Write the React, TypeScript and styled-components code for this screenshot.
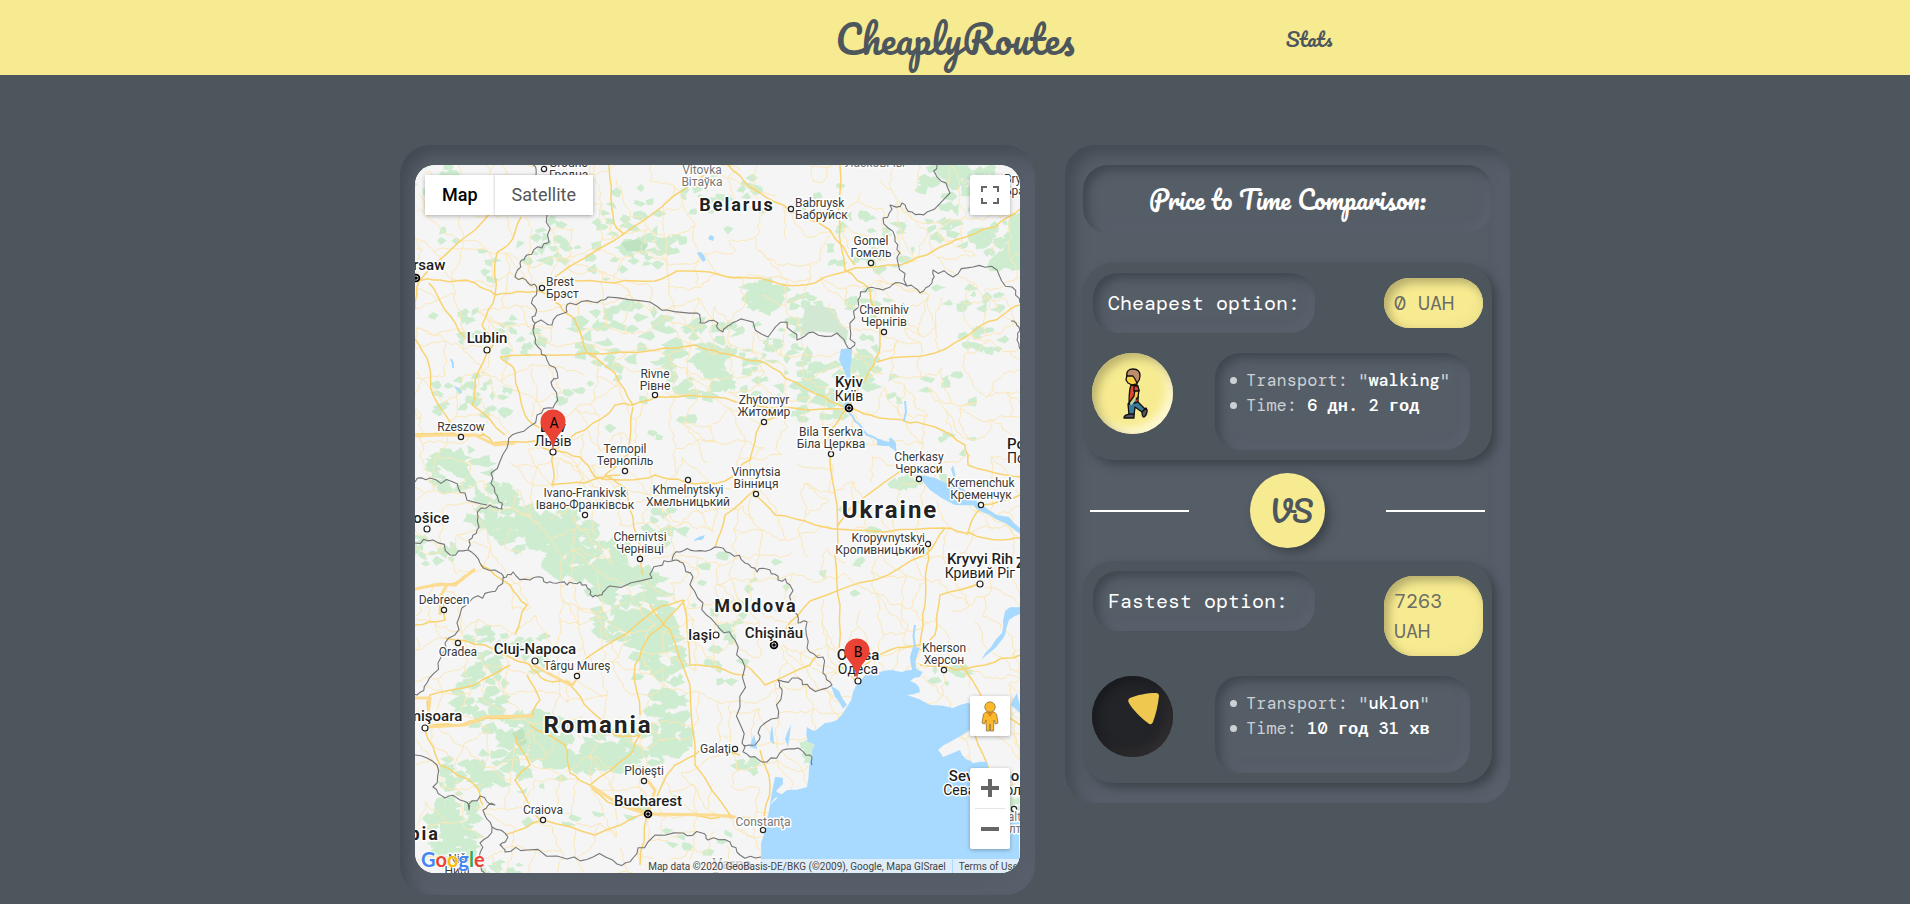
import React from 'react';
import styled, { createGlobalStyle, css } from 'styled-components';

const script = '"Pacifico", "Lato", "Liberation Sans", sans-serif';
const mono = '"DM Mono", "Liberation Mono", monospace';

const GlobalStyle = createGlobalStyle`
  * { box-sizing: border-box; }
  body { margin: 0; background: #4d555d; font-family: ${mono}; color: #fff; }
  button { font: inherit; border: 0; padding: 0; cursor: pointer; }
  h1, h2, h3, p, ul { margin: 0; padding: 0; font-weight: 400; }
`;

/* ---------- page frame ---------- */

const Header = styled.header`
  height: 75px;
  background: #f7eb91;
  color: #4d555d;
  font-family: ${script};
`;

const Nav = styled.nav`
  display: grid;
  grid-template-columns: repeat(3, 1fr);
  max-width: 1062px;
  height: 100%;
  margin: 0 auto;
  padding-top: 2px;
  align-items: center;
  justify-items: center;
`;

const NavLink = styled.a<{ $brand?: boolean }>`
  color: inherit;
  text-decoration: none;
  grid-column: ${(p) => (p.$brand ? 2 : 3)};
  font-size: ${(p) => (p.$brand ? 38 : 20)}px;
  line-height: 73px;
`;

const Main = styled.main`
  display: grid;
  grid-template-columns: repeat(12, 1fr);
  gap: 30px;
  align-items: start;
  max-width: 1140px;
  margin: 0 auto;
  padding: 70px 15px 9px;
`;

const hollow = css`
  background: #555d67;
  box-shadow: inset 5px 5px 10px #40474e, inset -5px -5px 10px #5b636e;
`;

const Panel = styled.section<{ $span: number; $pad: string }>`
  grid-column: span ${(p) => p.$span};
  padding: ${(p) => p.$pad};
  border-radius: 30px;
  background: #555d67;
  box-shadow: inset 8px 8px 15px #434a52, inset -8px -8px 15px #5a626e;
`;

/* ---------- comparison ---------- */

const Title = styled.h1`
  ${hollow}
  border-radius: 25px;
  padding: 20px 10px;
  margin-bottom: 30px;
  text-align: center;
  font: 400 25px/28px ${script};
`;

const Card = styled.article`
  border-radius: 30px;
  background: #4d555d;
  box-shadow: 5px 5px 10px #3d444b;
  padding: 10px 9px;
`;

const CardRow = styled.div<{ $details?: boolean }>`
  display: flex;
  justify-content: space-between;
  align-items: flex-start;
  padding-left: 1px;
  ${(p) => p.$details && 'margin-top: 20px; padding: 0 13px 0 0;'}
`;

const OptionName = styled.h2`
  ${hollow}
  border-radius: 25px;
  padding: 15px;
  width: 57%;
  font-size: 20px;
  line-height: 30px;
`;

const Price = styled.p`
  width: 99px;
  margin-top: 5px;
  padding: 10px;
  border-radius: 30px;
  background: #f7eb91;
  box-shadow: inset 5px 5px 10px #b8ae6b, inset -5px -5px 10px #f1e58f;
  color: #6d6d66;
  font-size: 20px;
  line-height: 30px;
`;

const Avatar = styled.div<{ $dark?: boolean }>`
  width: 81px;
  height: 81px;
  border-radius: 50%;
  overflow: hidden;
  background: ${(p) => (p.$dark ? '#232428' : '#f7eb91')};
  box-shadow: ${(p) =>
    p.$dark
      ? 'inset 5px 5px 10px #191b1e, inset -5px -5px 10px #302e2f'
      : 'inset 5px 5px 10px #bcb26e, inset -5px -5px 10px #fffbdc'};
  svg { display: block; }
`;

const Details = styled.ul`
  ${hollow}
  width: 255px;
  border-radius: 25px;
  padding: 15px 12px 32px 31px;
  color: #ccd0d3;
  font-size: 17px;
  line-height: 25px;
  list-style: none;
  white-space: nowrap;
  b { color: #fff; }
`;

const Detail = styled.li`
  position: relative;
  &::before {
    content: '';
    position: absolute;
    left: -16px;
    top: 9px;
    width: 7px;
    height: 7px;
    border-radius: 50%;
    background: #ccd0d3;
  }
`;

const Versus = styled.div`
  display: flex;
  align-items: center;
  justify-content: space-between;
  margin: 13px 0;
  padding: 0 7px;
`;

const Rule = styled.span`
  width: 25%;
  height: 2px;
  background: #fff;
`;

const VersusBadge = styled.strong`
  width: 75px;
  height: 75px;
  border-radius: 50%;
  background: #f7eb91;
  box-shadow: 5px 5px 10px #3d444b;
  color: #4d555d;
  text-align: center;
  padding-left: 7px;
  font: 400 30px/75px ${script};
`;

/* ---------- map ---------- */

const MapFrame = styled.div`
  position: relative;
  aspect-ratio: 605 / 708;
  border-radius: 20px;
  overflow: hidden;
  background: #f5f5f5;
  font-family: Roboto, sans-serif;
`;

const MapCanvas = styled.svg`
  display: block;
  width: 100%;
  height: 100%;
`;

const controlFace = css`
  background: #fff;
  border-radius: 2px;
  box-shadow: 0 1px 4px rgba(0, 0, 0, 0.3);
`;

const MapTypes = styled.div`
  ${controlFace}
  position: absolute;
  left: 10px;
  top: 10px;
  display: flex;
  height: 40px;
`;

const MapType = styled.button<{ $active?: boolean }>`
  background: #fff;
  padding: 0 17px;
  font-size: 18px;
  line-height: 40px;
  color: ${(p) => (p.$active ? '#000' : '#565656')};
  font-weight: ${(p) => (p.$active ? 500 : 400)};
  & + & { box-shadow: -1px 0 2px rgba(0, 0, 0, 0.15); }
`;

const Fullscreen = styled.div`
  position: absolute;
  right: 10px;
  top: 10px;
`;

const SideControls = styled.div`
  position: absolute;
  right: 10px;
  bottom: 24px;
  display: grid;
  gap: 32px;
`;

const Square = styled.button`
  ${controlFace}
  display: grid;
  place-items: center;
  width: 40px;
  height: 40px;
`;

const ZoomGroup = styled.div`
  ${controlFace}
  display: grid;
  justify-items: center;
`;

const ZoomButton = styled.button`
  display: grid;
  place-items: center;
  width: 40px;
  height: 40px;
  background: none;
`;

const ZoomLine = styled.span`
  width: 30px;
  height: 1px;
  background: #e6e6e6;
`;

const GoogleMark = styled.a`
  position: absolute;
  left: 6px;
  bottom: 1px;
  font: 700 20px/26px Lato, sans-serif;
  text-decoration: none;
  text-shadow: 0 0 2px #fff, 0 0 2px #fff;
`;

const Letter = styled.span<{ $c: string }>`
  color: ${(p) => p.$c};
`;

const Credits = styled.div`
  position: absolute;
  right: 0;
  bottom: 0;
  display: flex;
  height: 14px;
  font-size: 10px;
  line-height: 16px;
  color: #444;
  white-space: nowrap;
  a { color: inherit; text-decoration: none; }
`;

const Credit = styled.span`
  background: rgba(245, 245, 245, 0.7);
  padding: 0 6px;
  & + & { margin-left: 1px; }
  &:last-child { padding-right: 2px; }
`;

/* Terrain drawing helpers: a seeded generator keeps the landscape stable. */
type Pt = [number, number];

function seeded(seed: number) {
  let s = seed;
  return () => {
    s = (s * 1664525 + 1013904223) % 4294967296;
    return s / 4294967296;
  };
}

const parse = (t: string): Pt[] => t.split(' ').map((p) => p.split(',').map(Number) as Pt);

function rough(points: Pt[], amount: number, passes: number, seed: number): Pt[] {
  const rnd = seeded(seed);
  let pts = points;
  for (let k = 0; k < passes; k++) {
    const next: Pt[] = [pts[0]];
    for (let i = 1; i < pts.length; i++) {
      const [ax, ay] = pts[i - 1];
      const [bx, by] = pts[i];
      const len = Math.hypot(bx - ax, by - ay);
      const d = (rnd() - 0.5) * Math.min(len, 14) * amount;
      next.push([(ax + bx) / 2 - ((by - ay) / (len || 1)) * d, (ay + by) / 2 + ((bx - ax) / (len || 1)) * d], pts[i]);
    }
    pts = next;
  }
  return pts;
}

const toPath = (pts: Pt[], close = false) =>
  'M' + pts.map((p) => `${p[0].toFixed(1)} ${p[1].toFixed(1)}`).join('L') + (close ? 'Z' : '');

const BORDERS = [
  '118,0 121,10 132,50 134,77 127,83 112,90 105,98 100,112 113,118 122,125 120,142 117,152 118,165 123,182 132,195 143,213 136,217 142,232 138,243 122,250 102,268 92,283 76,308 80,328 87,338 87,344 75,340 63,352 62,365 54,375 53,385 65,398 85,408 88,413 98,407 115,415 128,413 138,418 152,420 165,417 175,425 178,432 187,430 195,421 237,413 243,401 257,396 265,387 280,386 300,382 315,388 330,398 342,407 355,405 363,415 375,420 377,442 383,458 392,457 392,483 408,492 408,508 417,520 395,523 383,513 363,515 367,528 363,553 343,568 340,580 328,580',
  '257,396 268,398 278,412 288,438 300,458 305,464 320,475 330,502 325,542 327,578 335,592 352,597 368,585 383,583 395,590 397,600',
  '0,317 15,313 38,317 50,328 72,340',
  '0,378 18,375 35,390 53,385',
  '88,413 75,427 58,433 42,458 30,478 23,498 12,518 2,530 0,530',
  '0,590 22,600 18,622 30,633 45,635 54,645 65,631 80,640 68,645 77,662 65,678 63,695 70,708',
  '77,662 93,672 85,680 90,687 112,685 152,694 178,692 202,699 218,693 233,677 268,668 287,668 293,675 315,677 325,690 346,692',
  '118,165 122,157 137,160 152,147 155,138 178,137 193,132 235,137 252,145 282,148 285,158 303,158 308,167 315,160 330,155 353,172 372,157 382,175 398,167 422,168 433,183 440,178 435,158 443,135 453,123 468,125 477,120 492,121 483,98 485,88 480,72 468,53 475,40 487,38 497,47 512,47 535,28 522,12 522,0',
  '492,121 505,128 517,118 518,105 538,112 558,102 582,105 597,122 605,138',
  '596,156 604,162 602,175 605,184',
];

const SEA =
  '345,708 346,694 346,678 350,658 355,640 372,625 392,622 394,603 397,590 400,580 393,577 392,562 400,566 410,558 422,555 432,542 438,527 445,517 452,508 465,507 477,505 487,507 497,505 495,492 498,482 505,483 501,494 501,503 508,507 505,512 495,516 504,522 505,527 492,530 515,540 538,543 552,538 572,543 578,558 565,563 555,565 535,577 523,585 528,592 545,585 551,594 558,598 572,597 575,608 560,620 565,640 585,650 596,658 605,646 605,708';

const WATER = [
  '426,184 437,184 435,205 438,222 430,226 430,208 424,195',
  '430,226 434,226 433,244 429,244',
  '462,275 474,277 475,272 481,278 482,288 478,284 474,281 462,280',
  '502,310 520,313 540,322 536,304 538,300 542,318 560,333 564,340 540,340 515,325',
  '552,335 567,340 582,350 594,352 605,363 605,369 590,358 575,350 562,344',
  '590,446 596,442 605,442 605,449 594,455 590,470 578,484 566,495 576,482 587,468 588,456',
  '416,521 424,526 432,540 428,544 420,532',
  '360,612 368,613 368,619 361,626 369,630 360,633 355,640 358,622',
  '282,88 286,87 291,95 288,97', '280,374 290,370 287,375 279,376', '295,70 299,72 298,76 293,74',
  '335,582 339,570 342,584', '355,575 357,560 359,580', '370,574 376,560 373,582', '596,540 602,528 605,540 605,548',
];

const RIVERS = ['434,248 440,256 448,265 458,272 468,276', '488,138 489,150', '490,236 489,256', '36,194 38,203', '40,222 46,228', '500,482 500,460', '588,472 570,490'];

const HIGHWAYS = [
  '0,114 25,115 60,118 80,130 110,127 125,125 150,113 200,118 240,116 262,106 305,110 345,113 370,120 400,118 440,103 485,100 520,85 540,75 580,62 605,44',
  '14,118 30,145 50,172', '106,52 93,80 82,88 80,130 67,160 78,180 60,215 57,240 90,270', '194,0 197,45 200,60 209,70',
  '0,174 14,200 18,230 40,268 0,270', '85,192 100,206 110,250 128,266', '85,192 130,190 170,188 240,185 280,180 305,188 345,196 370,213 410,232 430,242',
  '122,125 145,140 160,155 168,175 172,188 200,208 218,240 240,232 262,232 310,233 355,243 432,244',
  '138,285 170,265 200,240 218,240', '138,285 165,292 180,312 212,315 240,310 270,317 310,316 335,295 345,260 365,250',
  '218,242 212,290 190,310 212,325 218,352 225,390 228,410', '138,287 137,320 170,318 205,310', '70,270 0,269', '30,270 60,262 78,278 120,276 138,287',
  '432,244 455,250 495,258 520,262 550,280 553,300 590,310 605,312', '432,244 415,265 415,290 422,340 420,390 425,440 425,500 440,515', '432,244 455,205 465,180 465,165 455,125 430,105 425,60 425,0',
  '462,197 520,188 560,165 588,150 605,140', '313,0 335,22 368,40 415,65 440,100', '140,112 200,75 260,30 290,10', '0,145 5,115 60,65 90,35',
  '340,330 360,350 400,360 470,367 530,363 555,368 585,375 605,373', '340,325 310,350 300,383', '422,362 440,340 480,310 500,300', '530,363 510,390 460,415 395,436 370,465',
  '440,505 475,485 505,480 510,440 512,400 515,378', '505,500 540,505 580,497 605,490', '567,418 525,430 520,470 505,485', '552,370 560,350 567,340 605,330',
  '30,473 70,480 100,495 115,500 130,515 158,520 165,500 200,475 240,445 268,435', '112,510 125,535 118,550 70,553 40,560 12,560', '155,520 175,545 200,570 225,570 215,590 175,620',
  '100,470 112,440 95,420 65,400', '0,425 40,418 60,405', '0,460 30,455 28,430', '12,560 15,530 60,520 95,500', '10,565 25,600 60,620 68,640', '115,560 150,580 155,608 175,620 200,640 232,648',
  '232,648 260,600 285,585 325,590', '232,648 180,670 128,655 90,670', '232,650 225,700', '232,650 290,652 315,650 345,660', '125,655 100,615 115,600 100,570', '268,435 275,500 310,505 330,510',
  '345,585 355,620 345,660', '315,650 280,600 275,520 255,465 235,440', '330,500 350,520 395,500 405,490', '560,570 575,610 590,620', '580,545 605,560', '545,500 560,520 575,545', '270,435 235,470 220,500 225,550',
];

/* Wooded areas: centre, radii and number of patches. */
const FORESTS: [number, number, number, number, number][] = [
  [20, 15, 30, 20, 16], [80, 80, 60, 40, 14], [130, 75, 25, 25, 16], [220, 55, 40, 40, 26], [245, 80, 28, 10, 20], [195, 95, 50, 25, 14],
  [40, 160, 30, 20, 10], [105, 175, 25, 22, 20], [55, 235, 45, 25, 28], [215, 170, 60, 35, 36], [285, 195, 35, 40, 40], [345, 175, 40, 25, 24],
  [395, 150, 30, 20, 22], [430, 60, 50, 40, 20], [310, 35, 45, 30, 22], [350, 130, 20, 14, 31], [545, 20, 40, 28, 34], [595, 80, 25, 30, 30],
  [515, 70, 40, 22, 16], [465, 95, 25, 14, 12], [460, 140, 30, 15, 14], [545, 135, 50, 15, 12], [570, 175, 25, 12, 14], [400, 220, 40, 40, 36],
  [450, 200, 14, 30, 24], [345, 210, 45, 20, 18], [50, 310, 40, 26, 34], [80, 345, 30, 25, 34], [130, 365, 50, 24, 64], [175, 395, 48, 20, 56],
  [15, 385, 25, 18, 20], [215, 420, 40, 18, 34], [220, 455, 40, 28, 62], [245, 490, 24, 45, 48], [70, 480, 25, 16, 16], [70, 530, 32, 35, 38],
  [120, 570, 38, 22, 50], [170, 590, 55, 16, 54], [215, 585, 50, 20, 54], [255, 560, 22, 30, 40], [85, 605, 30, 20, 32], [40, 665, 25, 35, 50],
  [45, 610, 22, 20, 20], [85, 705, 22, 10, 10], [250, 360, 22, 20, 20], [120, 485, 25, 25, 12], [305, 430, 28, 50, 16], [310, 500, 20, 30, 10],
  [395, 585, 6, 12, 14], [335, 600, 12, 8, 8], [490, 317, 12, 8, 14], [535, 510, 22, 10, 10], [598, 640, 8, 15, 16],
  [550, 270, 50, 60, 10], [420, 400, 90, 60, 10], [200, 250, 80, 40, 14], [190, 650, 100, 40, 12], [280, 680, 60, 15, 6], [490, 230, 60, 20, 6],
];

const WOODS = [
  '523,0 552,0 546,14 534,30 528,14', '605,43 595,52 590,82 572,102 590,103 605,105', '552,68 580,62 572,82 562,85 556,78',
  '95,340 112,346 130,350 155,360 180,385 175,395 150,388 118,375 100,360', '30,295 48,300 60,315 80,340 60,330 42,312',
  '165,400 200,392 225,405 215,420 185,424 170,412', '195,445 235,455 255,440 260,470 240,480 205,465', '235,490 250,500 255,520 242,515 235,500',
  '100,560 125,565 150,580 145,595 115,585', '150,588 185,595 205,582 215,595 180,602 150,598', '248,560 262,550 272,560 255,585 240,585',
  '290,180 305,182 312,205 295,212 280,198', '340,132 355,126 368,130 362,144 345,142', '440,182 458,190 455,212 445,220',
  '20,640 40,650 50,670 35,690 25,665', '482,317 498,310 492,326 480,322', '392,578 400,580 399,600 393,590',
];

const rndForest = seeded(41);
const forestPatches = FORESTS.flatMap(([cx, cy, rx, ry, n]) =>
  Array.from({ length: n }, () => {
    const a = rndForest() * Math.PI * 2;
    const r = Math.sqrt(rndForest());
    const x = cx + Math.cos(a) * rx * r;
    const y = cy + Math.sin(a) * ry * r;
    const size = n > 30 ? 8 : 6;
    const corners = 4 + Math.floor(rndForest() * 3);
    const pts: Pt[] = Array.from({ length: corners }, (_, i) => {
      const t = (i / corners) * Math.PI * 2;
      const d = size * (0.25 + rndForest());
      return [x + Math.cos(t) * d * 1.2, y + Math.sin(t) * d * 0.8];
    });
    return toPath(pts, true);
  }),
).join('');
const woodPath = WOODS.map((w, i) => {
  const pts = parse(w);
  return toPath(rough([...pts, pts[0]], 0.7, 2, i + 31), true);
}).join('');

const rndRoad = seeded(9);
const STEP = 23;
const junctions: Pt[][] = Array.from({ length: 33 }, (_, j) =>
  Array.from({ length: 29 }, (_, i) => [(i - 1) * STEP + (rndRoad() - 0.5) * 20, (j - 1) * STEP + (rndRoad() - 0.5) * 20] as Pt),
);
const lanes: string[] = [];
junctions.forEach((row, j) =>
  row.forEach((p, i) => {
    const near = [row[i + 1], junctions[j + 1]?.[i], junctions[j + 1]?.[i + 1]];
    near.forEach((q, k) => {
      if (q && rndRoad() < [0.6, 0.6, 0.2][k]) lanes.push(toPath(rough([p, q], 0.45, 3, i * 71 + j * 13 + k)));
    });
  }),
);

const borderPath = BORDERS.map((b, i) => toPath(rough(parse(b), 0.6, 2, i + 5))).join('');
const highwayPath = HIGHWAYS.map((b, i) => toPath(rough(parse(b), 0.25, 2, i + 77))).join('');
const waterPath = WATER.map((b, i) => toPath(rough(parse(b), 0.15, 1, i), true)).join('');
const riverPath = RIVERS.map((b, i) => toPath(rough(parse(b), 0.4, 1, i))).join('');

type Anchor = 'start' | 'middle' | 'end';
type Place = { x: number; y: number; lines: string[]; dot?: Pt; big?: boolean; capital?: boolean; anchor?: Anchor; faint?: boolean };

const PLACES: Place[] = [
  { x: 134, y: 2, lines: ['Grodno', 'Гродна'], dot: [129, 4], anchor: 'start' },
  { x: 287, y: 9, lines: ['Vitovka', 'Вітаўка'], faint: true },
  { x: 460, y: 2, lines: ['Ласковічы'], faint: true },
  { x: 380, y: 42, lines: ['Babruysk', 'Бабруйск'], dot: [376, 44], anchor: 'start' },
  { x: 456, y: 80, lines: ['Gomel', 'Гомель'], dot: [456, 98] },
  { x: 589, y: 18, lines: ['Bryansk', 'Бранск'], anchor: 'start' },
  { x: -23, y: 105, lines: ['Warsaw'], dot: [1, 113], big: true, capital: true, anchor: 'start' },
  { x: 131, y: 121, lines: ['Brest', 'Брэст'], dot: [127, 123], anchor: 'start' },
  { x: 72, y: 178, lines: ['Lublin'], dot: [72, 185], big: true },
  { x: 469, y: 149, lines: ['Chernihiv', 'Чернігів'], dot: [469, 167] },
  { x: 240, y: 213, lines: ['Rivne', 'Рівне'], dot: [240, 230] },
  { x: 434, y: 222, lines: ['Kyiv', 'Київ'], dot: [434, 243], big: true, capital: true },
  { x: 349, y: 239, lines: ['Zhytomyr', 'Житомир'], dot: [349, 257] },
  { x: 46, y: 266, lines: ['Rzeszow'], dot: [46, 272] },
  { x: 138, y: 267, lines: ['Lviv', 'Львів'], dot: [138, 287], big: true },
  { x: 416, y: 271, lines: ['Bila Tserkva', 'Біла Церква'], dot: [416, 289] },
  { x: 210, y: 288, lines: ['Ternopil', 'Тернопіль'], dot: [210, 306] },
  { x: 341, y: 311, lines: ['Vinnytsia', 'Вінниця'], dot: [341, 329] },
  { x: 504, y: 296, lines: ['Cherkasy', 'Черкаси'], dot: [504, 314] },
  { x: 592, y: 284, lines: ['Poltava', 'Полтава'], big: true, anchor: 'start' },
  { x: 273, y: 329, lines: ['Khmelnytskyi', 'Хмельницький'], dot: [273, 315] },
  { x: 170, y: 332, lines: ['Ivano-Frankivsk', 'Івано-Франківськ'], dot: [170, 350] },
  { x: 566, y: 322, lines: ['Kremenchuk', 'Кременчук'], dot: [566, 340] },
  { x: -11, y: 358, lines: ['Košice'], dot: [12, 364], big: true, anchor: 'start' },
  { x: 225, y: 376, lines: ['Chernivtsi', 'Чернівці'], dot: [225, 394] },
  { x: 510, y: 377, lines: ['Kropyvnytskyi', 'Кропивницький'], dot: [513, 379], anchor: 'end' },
  { x: 565, y: 399, lines: ['Kryvyi Rih', 'Кривий Ріг'], dot: [565, 419], big: true },
  { x: 601, y: 403, lines: ['Zaporizhzhia'], big: true, anchor: 'start' },
  { x: 29, y: 439, lines: ['Debrecen'], dot: [29, 445] },
  { x: 43, y: 491, lines: ['Oradea'], dot: [43, 478] },
  { x: 120, y: 489, lines: ['Cluj-Napoca'], dot: [120, 496], big: true },
  { x: 162, y: 505, lines: ['Târgu Mureş'], dot: [162, 511] },
  { x: 297, y: 475, lines: ['Iaşi'], dot: [301, 470], big: true, anchor: 'end' },
  { x: 359, y: 473, lines: ['Chişinău'], dot: [359, 480], big: true, capital: true },
  { x: 443, y: 495, lines: ['Odesa', 'Одеса'], dot: [443, 516], big: true },
  { x: 529, y: 487, lines: ['Kherson', 'Херсон'], dot: [529, 505] },
  { x: -20, y: 556, lines: ['Timişoara'], dot: [10, 563], big: true, anchor: 'start' },
  { x: 316, y: 588, lines: ['Galaţi'], dot: [320, 584], anchor: 'end' },
  { x: 229, y: 610, lines: ['Ploieşti'], dot: [229, 616] },
  { x: 128, y: 649, lines: ['Craiova'], dot: [128, 655] },
  { x: 233, y: 641, lines: ['Bucharest'], dot: [233, 649], big: true, capital: true },
  { x: 571, y: 616, lines: ['Sevastopol', 'Севастополь'], big: true },
  { x: 586, y: 656, lines: ['Yalta', 'Ялта'], dot: [599, 644], anchor: 'start', faint: true },
  { x: 348, y: 661, lines: ['Constanţa'], dot: [348, 665], faint: true },
  { x: 42, y: 698, lines: ['Niš', 'Ниш'] },
  { x: 317, y: 704, lines: ['Varna', 'Варна'], faint: true, big: true },
];

const COUNTRIES: [number, number, string, number][] = [
  [322, 46, 'Belarus', 18],
  [475, 353, 'Ukraine', 24],
  [341, 447, 'Moldova', 18],
  [183, 568, 'Romania', 24],
  [-7, 675, 'Serbia', 18],
];

const PlaceText = styled.text<{ $size: number; $weight: number; $fill: string }>`
  font-family: Roboto, sans-serif;
  font-size: ${(p) => p.$size}px;
  font-weight: ${(p) => p.$weight};
  fill: ${(p) => p.$fill};
  paint-order: stroke;
  stroke: #fff;
  stroke-width: 3px;
  stroke-linejoin: round;
`;

const CountryText = styled(PlaceText)`
  letter-spacing: 2px;
`;

const PinText = styled.text`
  font: 14px Roboto, sans-serif;
  fill: #000;
`;

function PlaceLabel({ place }: { place: Place }) {
  const { x, y, lines, dot, big, capital, anchor = 'middle', faint } = place;
  const size = big ? 15 : 12;
  const fill = faint ? '#777' : big ? '#1e1e1e' : '#3a3a3a';
  return (
    <g>
      {dot && <circle cx={dot[0]} cy={dot[1]} r={big ? 3 : 2.6} fill="#fff" stroke="#222" strokeWidth="1.2" />}
      {dot && capital && <circle cx={dot[0]} cy={dot[1]} r="3.6" fill="none" stroke="#000" strokeWidth="1.3" />}
      {dot && capital && <circle cx={dot[0]} cy={dot[1]} r="1.8" fill="#000" />}
      {lines.map((line, i) => (
        <PlaceText
          key={line}
          x={x}
          y={y + i * (big ? 14 : 12)}
          textAnchor={anchor}
          $size={big && i > 0 ? 14 : size}
          $weight={big && i === 0 ? 500 : 400}
          $fill={fill}
        >
          {line}
        </PlaceText>
      ))}
    </g>
  );
}

function Pin({ x, y, name }: { x: number; y: number; name: string }) {
  return (
    <g transform={`translate(${x} ${y})`}>
      <path d="M0 0C-1.500-12-5-15-9.500-21A12.500 12.500 0 1 1 9.500-21C5-15 1.500-12 0 0Z" fill="#ea4335" />
      <PinText x="1" y="-23" textAnchor="middle">{name}</PinText>
    </g>
  );
}

function Landscape() {
  return (
    <MapCanvas viewBox="0 0 605 708" preserveAspectRatio="xMidYMid slice" role="img" aria-label="Map of Ukraine with route points A and B">
      <rect width="605" height="708" fill="#f5f5f5" />
      <path d={forestPatches} fill="#ceeccf" />
      <path d={woodPath} fill="#ceeccf" />
      <path d="M390 142L403 141L420 144L424 156L433 166L431 180L421 168L398 166L385 172Z" fill="#d3e8d3" />
      <path d="M206 78L222 74L233 80L228 87L212 86Z M97 568L108 563L112 578L104 582Z" fill="#bfe3c1" />
      <path d={lanes.join('')} fill="none" stroke="#fce8b8" strokeWidth="1" />
      <path d={highwayPath} fill="none" stroke="#f9d36f" strokeWidth="1.5" strokeLinejoin="round" />
      <path d="M0 424L25 419L40 420L60 404M25 450L26 430L32 420M0 533L15 533L12 562L50 560L70 552L118 551M155 520L118 500M175 620L205 640L232 649L300 650L346 655M233 648L240 625L232 615M0 271L28 270L60 270L80 280L100 278" fill="none" stroke="#fbdc92" strokeWidth="3" strokeLinejoin="round" />
      <path d={toPath(rough(parse(SEA), 0.25, 1, 3), true)} fill="#a8daff" />
      <path d={waterPath} fill="#a8daff" />
      <path d={riverPath} fill="none" stroke="#a8daff" strokeWidth="2" />
      <path d={borderPath} fill="none" stroke="#777" strokeWidth="1.100" strokeLinejoin="round" />
      {PLACES.map((p) => (
        <PlaceLabel key={p.lines[0]} place={p} />
      ))}
      {COUNTRIES.map(([x, y, name, size]) => (
        <CountryText key={name} x={x} y={y} textAnchor="middle" $size={size} $weight={700} $fill="#222">
          {name}
        </CountryText>
      ))}
      <Pin x={138} y={286} name="A" />
      <Pin x={442} y={515} name="B" />
    </MapCanvas>
  );
}

function RouteMap() {
  return (
    <MapFrame>
      <Landscape />
      <MapTypes>
        <MapType $active>Map</MapType>
        <MapType>Satellite</MapType>
      </MapTypes>
      <Fullscreen>
        <Square aria-label="Toggle fullscreen view">
          <svg width="18" height="18" fill="none" stroke="#666" strokeWidth="2">
            <path d="M1 6V1H6M12 1H17V6M17 12V17H12M6 17H1V12" />
          </svg>
        </Square>
      </Fullscreen>
      <SideControls>
        <Square aria-label="Street View">
          <svg width="18" height="31" viewBox="0 0 18 31" stroke="#8b7443" strokeWidth="0.800">
            <path d="M5 11L2.500 13L1 22L3.500 23L5 19L5.500 30H8.500L9 23L9.500 30H12.500L13 19L14.500 23L17 22L15.500 13L13 11Z" fill="#fbb829" />
            <path d="M5.500 11H12.500L9 16Z" fill="#e08a1e" stroke="none" />
            <circle cx="9" cy="6" r="5.200" fill="#fbb829" />
          </svg>
        </Square>
        <ZoomGroup>
          <ZoomButton aria-label="Zoom in">
            <svg width="18" height="18" stroke="#666" strokeWidth="4"><path d="M0 9H18M9 0V18" /></svg>
          </ZoomButton>
          <ZoomLine />
          <ZoomButton aria-label="Zoom out">
            <svg width="18" height="18" stroke="#666" strokeWidth="4"><path d="M0 9H18" /></svg>
          </ZoomButton>
        </ZoomGroup>
      </SideControls>
      <GoogleMark href="#google">
        <Letter $c="#4285f4">G</Letter>
        <Letter $c="#ea4335">o</Letter>
        <Letter $c="#fbbc05">o</Letter>
        <Letter $c="#4285f4">g</Letter>
        <Letter $c="#34a853">l</Letter>
        <Letter $c="#ea4335">e</Letter>
      </GoogleMark>
      <Credits>
        <Credit>Map data ©2020 GeoBasis-DE/BKG (©2009), Google, Mapa GISrael</Credit>
        <Credit><a href="#terms">Terms of Use</a></Credit>
      </Credits>
    </MapFrame>
  );
}

function Walker() {
  return (
    <svg width="81" height="81" viewBox="0 0 81 81" stroke="#111" strokeWidth="1.300" strokeLinejoin="round" strokeLinecap="round">
      <path d="M36 51L37 62H42L43 54L50 59L53 56L46 49Z" fill="#3c7a9c" />
      <path d="M32 65C32 61 36 62 37 61H42V65Z" fill="#55565c" />
      <path d="M50 59L54 55C56 57 55 62 52 64C50 64 50 61 50 59Z" fill="#55565c" />
      <path d="M39 32L45 32C47 36 46 44 46 49L37 51C37 44 37 37 39 32Z" fill="#e2462d" />
      <path d="M43 37H47L46 44L39 52L37 50L42 43Z" fill="#fcc947" />
      <path d="M38 51L43 45L44 47L39 53Z" fill="#9fd8c5" stroke="none" />
      <path d="M42 33H46L47 38H42Z" fill="#e2462d" />
      <path d="M35 22L34 27L36 30L40 32L45 31V24L38 20Z" fill="#fcd14a" />
      <path d="M35 23C34 18 37 16 41 16C46 16 48 19 48 23C48 27 46 29 45 30L43 26L41 23Z" fill="#bd8d6d" />
    </svg>
  );
}

function UklonMark() {
  return (
    <svg width="81" height="81" viewBox="0 0 81 81">
      <path d="M38 22C45 19 55 17 64 17Q67 17 67 20C66 29 64 38 61 46Q59 50 56 47C49 42 41 34 37 27Q35 24 38 22Z" fill="#efc94f" />
    </svg>
  );
}

type OptionProps = { label: string; price: string; transport: string; time: string; dark?: boolean; children: React.ReactNode };

function RouteOption({ label, price, transport, time, dark, children }: OptionProps) {
  return (
    <Card>
      <CardRow>
        <OptionName>{label}</OptionName>
        <Price>{price}</Price>
      </CardRow>
      <CardRow $details>
        <Avatar $dark={dark}>{children}</Avatar>
        <Details>
          <Detail>Transport: "<b>{transport}</b>"</Detail>
          <Detail>Time: <b>{time}</b></Detail>
        </Details>
      </CardRow>
    </Card>
  );
}

export default function App() {
  return (
    <>
      <GlobalStyle />
      <Header>
        <Nav>
          <NavLink href="#home" $brand>CheaplyRoutes</NavLink>
          <NavLink href="#stats">Stats</NavLink>
        </Nav>
      </Header>
      <Main>
        <Panel $span={7} $pad="20px 15px 22px">
          <RouteMap />
        </Panel>
        <Panel $span={5} $pad="20px 18px">
          <Title>Price to Time Comparison:</Title>
          <RouteOption label="Cheapest option:" price="0 UAH" transport="walking" time="6 дн. 2 год">
            <Walker />
          </RouteOption>
          <Versus>
            <Rule />
            <VersusBadge>VS</VersusBadge>
            <Rule />
          </Versus>
          <RouteOption label="Fastest option:" price="7263 UAH" transport="uklon" time="10 год 31 хв" dark>
            <UklonMark />
          </RouteOption>
        </Panel>
      </Main>
    </>
  );
}
